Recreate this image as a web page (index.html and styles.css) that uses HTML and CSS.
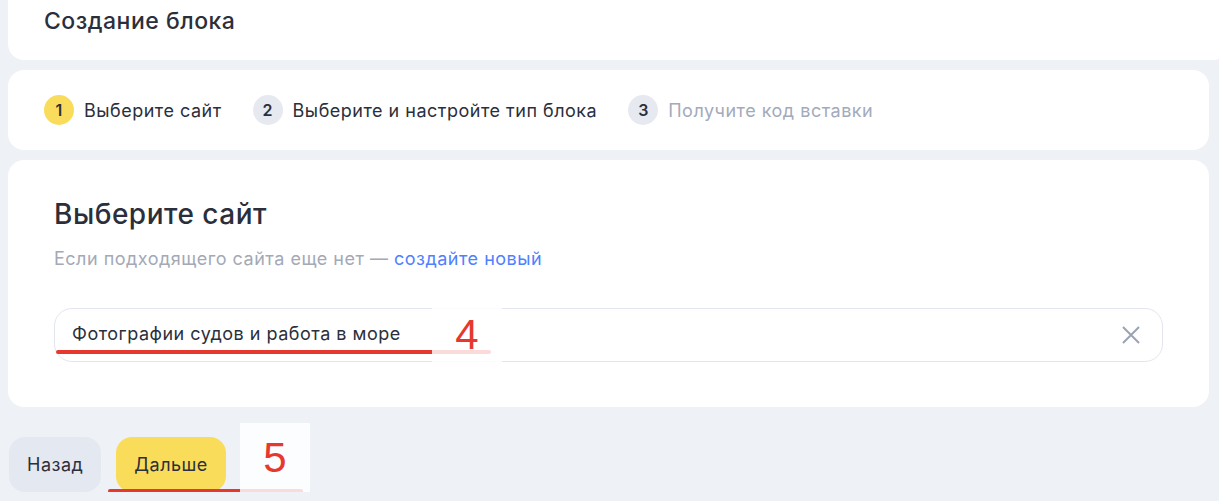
FILE: index.html
```html
<!DOCTYPE html>
<html lang="ru">
<head>
    <meta charset="UTF-8">
    <meta name="viewport" content="width=device-width, initial-scale=1.0">
    <title>Создание блока</title>
    <link rel="stylesheet" href="styles.css">
</head>
<body>

    <div class="page">
        <!-- Заголовок страницы -->
        <div class="card head">
            <h1>Создание блока</h1>
        </div>

        <!-- Шаги мастера -->
        <div class="card steps">
            <div class="step active"><span class="num">1</span>Выберите сайт</div>
            <div class="step"><span class="num">2</span>Выберите и настройте тип блока</div>
            <div class="step muted"><span class="num">3</span>Получите код вставки</div>
        </div>

        <!-- Выбор сайта -->
        <div class="card site">
            <h2>Выберите сайт</h2>
            <p class="hint">Если подходящего сайта еще нет — <a href="#">создайте новый</a></p>
            <div class="field">
                <span class="value">Фотографии судов и работа в море</span>
                <svg class="clear" width="20" height="20" viewBox="0 0 20 20">
                    <path d="M2 2 L18 18 M18 2 L2 18" stroke="#9aa2b3" stroke-width="2" fill="none"/>
                </svg>
                <span class="mark-line line-4"></span>
                <span class="mark mark-4">4</span>
            </div>
        </div>

        <div class="actions">
            <button class="btn back">Назад</button>
            <button class="btn next">Дальше</button>
            <span class="mark-line line-5"></span>
            <span class="mark mark-5">5</span>
        </div>
    </div>

</body>
</html>
```

FILE: styles.css
```css
body {
    font-family: Inter, "Noto Sans", Arial, sans-serif;
    background-color: #eef1f6;
    color: #2b2f3b;
    letter-spacing: 0.5px;
    margin: 0;
    padding: 0;
    overflow: hidden;
}
.page {
    display: flex;
    flex-direction: column;
    gap: 10px;
    padding: 0 10px 0 8px;
}
.card {
    background-color: white;
    border-radius: 16px;
}
.head {
    margin-top: -20px;
    margin-right: -20px;
    height: 80px;
    padding: 0 36px;
    display: flex;
    align-items: center;
}
.head h1 {
    margin: 0;
    font-size: 23px;
    font-weight: 500;
    line-height: 28px;
    position: relative;
    top: 1px;
}
.steps {
    height: 80px;
    padding: 0 36px;
    display: flex;
    align-items: center;
    gap: 31px;
}
.step {
    display: flex;
    align-items: center;
    gap: 10px;
    font-size: 18px;
}
.step .num {
    width: 30px;
    height: 30px;
    border-radius: 50%;
    background-color: #e6e9ef;
    display: flex;
    align-items: center;
    justify-content: center;
    font-size: 16px;
    font-weight: 600;
    letter-spacing: 0;
    color: #2b2f3b;
}
.step.active .num {
    background-color: #fadc5c;
}
.step.muted {
    color: #a3aabb;
}
.site {
    height: 247px;
    box-sizing: border-box;
    padding: 36px 46px 0 46px;
}
.site h2 {
    margin: 0;
    font-size: 28px;
    font-weight: 500;
    line-height: 36px;
}
.hint {
    margin: 16px 0 0;
    font-size: 18px;
    color: #a3a9b6;
}
.hint a {
    color: #4f80ff;
    text-decoration: none;
}
.field {
    position: relative;
    margin-top: 39px;
    height: 54px;
    box-sizing: border-box;
    border: 1px solid #e3e6ed;
    border-radius: 18px;
    display: flex;
    align-items: center;
    justify-content: space-between;
    padding: 0 21px 0 17px;
    font-size: 18px;
}
.value {
    position: relative;
    top: -2px;
}
.actions {
    position: relative;
    display: flex;
    gap: 15px;
    margin-top: 20px;
    padding-left: 1px;
}
.btn {
    height: 55px;
    padding: 0 18px;
    border: none;
    border-radius: 16px;
    font-family: inherit;
    font-size: 18px;
    letter-spacing: 0.5px;
    color: #2b2f3b;
    cursor: pointer;
}
.back {
    background-color: #e4e8f0;
}
.next {
    background-color: #f9dc5a;
}

/* пометки поверх скриншота */
.mark-line {
    position: absolute;
    height: 4px;
    border-radius: 2px;
    background-color: #e5392f;
}
.mark {
    position: absolute;
    width: 70px;
    background-color: rgba(255, 255, 255, 0.82);
    color: #e5392f;
    font-family: "Liberation Sans", Arial, sans-serif;
    font-size: 42px;
    letter-spacing: 0;
    display: flex;
    align-items: center;
    justify-content: center;
}
.line-4 {
    left: 1px;
    top: 41px;
    width: 435px;
}
.mark-4 {
    left: 377px;
    top: -1px;
    height: 54px;
}
.line-5 {
    left: 100px;
    top: 52px;
    width: 195px;
}
.mark-5 {
    left: 232px;
    top: -14px;
    height: 70px;
}
```
